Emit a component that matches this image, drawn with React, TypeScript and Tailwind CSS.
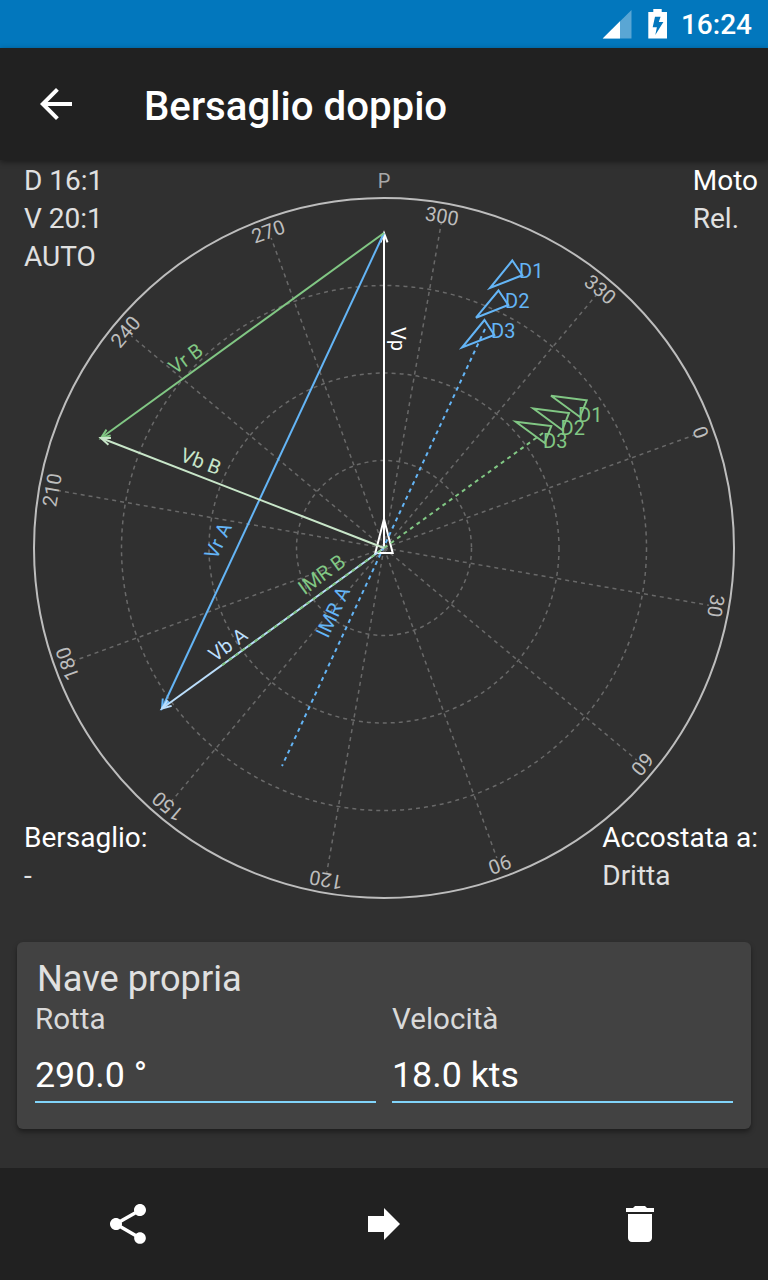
const CX = 384;
const CY = 388;
const R = 350;
const HEADING = 290;

const BEARINGS = [0, 30, 60, 90, 120, 150, 180, 210, 240, 270, 300, 330];

type Point = [number, number];

function Arrow({ from, to, color }: { from: Point; to: Point; color: string }) {
  const a = Math.atan2(to[1] - from[1], to[0] - from[0]);
  const len = 10;
  const spread = 0.36;
  const wing = (s: number) =>
    `${to[0] - len * Math.cos(a + s)},${to[1] - len * Math.sin(a + s)}`;
  return (
    <g stroke={color} fill="none" strokeWidth="2">
      <line x1={from[0]} y1={from[1]} x2={to[0]} y2={to[1]} />
      <polyline points={`${wing(spread)} ${to[0]},${to[1]} ${wing(-spread)}`} />
    </g>
  );
}

function Label({ x, y, angle = 0, color, children }: { x: number; y: number; angle?: number; color: string; children: string }) {
  return (
    <text transform={`translate(${x} ${y}) rotate(${angle})`} fill={color} fontSize="20">
      {children}
    </text>
  );
}

const BLUE = "#64b5f6";
const GREEN = "#81c784";
const PALE_BLUE = "#bbdefb";
const PALE_GREEN = "#c8e6c9";

const OWN: Point = [384, 388];
const TOP: Point = [384, 73];
const VA: Point = [162, 548.5];
const VB: Point = [101, 278];

function Plot() {
  return (
    <svg className="block h-[782px] w-full font-[Roboto,sans-serif]" viewBox="0 0 768 782">
      <g fill="none" stroke="#696969" strokeWidth="1.5" strokeDasharray="4 4">
        {[1, 2, 3].map((i) => (
          <circle key={i} cx={CX} cy={CY} r={(R * i) / 4} />
        ))}
        {BEARINGS.map((b) => {
          const a = ((b - HEADING) * Math.PI) / 180;
          return <line key={b} x1={CX} y1={CY} x2={CX + 330 * Math.sin(a)} y2={CY - 330 * Math.cos(a)} />;
        })}
      </g>
      <circle cx={CX} cy={CY} r={R} fill="none" stroke="#bdbdbd" strokeWidth="2" />
      <g fill="#bdbdbd" fontSize="20" textAnchor="middle">
        <text x={CX} y="28" fill="#a8a8a8">P</text>
        {BEARINGS.map((b) => (
          <text key={b} transform={`rotate(${b - HEADING} ${CX} ${CY})`} x={CX - 0.5} y="58">
            {b}
          </text>
        ))}
      </g>

      <Arrow from={OWN} to={TOP} color="#ffffff" />
      <polygon points="384,359 375.3,393 392.7,393" fill="none" stroke="#ffffff" strokeWidth="2" />
      <Label x={391} y={167} angle={90} color="#ffffff">Vp</Label>

      <Arrow from={TOP} to={VA} color={BLUE} />
      <Arrow from={OWN} to={VA} color={PALE_BLUE} />
      <line x1="485" y1="169" x2="282" y2="606" stroke={BLUE} strokeWidth="2" strokeDasharray="4 4" />
      <Arrow from={TOP} to={VB} color={GREEN} />
      <Arrow from={OWN} to={VB} color={PALE_GREEN} />
      <line x1="543" y1="273" x2="222" y2="505.2" stroke={GREEN} strokeWidth="2" strokeDasharray="4 4" />

      <Label x={216.5} y={400.5} angle={-65} color={BLUE}>Vr A</Label>
      <Label x={215} y={502.5} angle={-36} color={PALE_BLUE}>Vb A</Label>
      <Label x={328} y={479} angle={-65} color={BLUE}>IMR A</Label>
      <Label x={175} y={215} angle={-36} color={GREEN}>Vr B</Label>
      <Label x={179} y={300.5} angle={21} color={PALE_GREEN}>Vb B</Label>
      <Label x={304.5} y={435.5} angle={-36} color={GREEN}>IMR B</Label>

      <g fill="none" stroke={BLUE} strokeWidth="2">
        <polygon points="512.3,100.5 490,128 522.3,115.3" />
        <polygon points="498.5,130.5 476,157.7 508.3,145" />
        <polygon points="484.5,160 462,187.5 494.3,175" />
      </g>
      <Label x={519} y={118} color={BLUE}>D1</Label>
      <Label x={505} y={148} color={BLUE}>D2</Label>
      <Label x={491} y={178} color={BLUE}>D3</Label>
      <g fill="none" stroke={GREEN} strokeWidth="2">
        <polygon points="551,235.7 586.7,240.3 580,257" />
        <polygon points="533.3,248.5 569,253 562.3,270" />
        <polygon points="515.7,261.7 551.3,266 544.7,283" />
      </g>
      <Label x={578} y={262} color={GREEN}>D1</Label>
      <Label x={560.5} y={275} color={GREEN}>D2</Label>
      <Label x={543} y={288} color={GREEN}>D3</Label>
    </svg>
  );
}

function Field({ label, value }: { label: string; value: string }) {
  return (
    <div className="flex-1">
      <div className="pt-px text-[29.6px] leading-9 text-[#d9d9d9]">{label}</div>
      <div className="mt-2.5 flex h-14 items-center border-b-2 border-[#81d4fa] pt-1 text-[35.8px] text-white">
        {value}
      </div>
    </div>
  );
}

export default function App() {
  return (
    <div className="flex h-[1280px] w-[768px] flex-col bg-[#303030] font-[Roboto,sans-serif]">
      <header className="flex h-12 shrink-0 items-center justify-end bg-[#0277bd] pr-4 text-white">
        <svg className="mr-[11px] h-12 w-[70px]" viewBox="600 0 70 48">
          <path d="M602.7 38.6 L631.5 10 V38.6 Z" fill="#fff" fillOpacity=".35" />
          <path d="M602.7 38.6 L620 21.3 V38.6 Z" fill="#fff" />
          <path d="M653.3 9h8.4v3h5.3v26.6h-18.7V12h5z" fill="#fff" />
          <path d="M655 16.8h5.6L658.8 22h4.6L655.3 35l1.6-7.8h-4.2z" fill="#0277bd" />
        </svg>
        <span className="pt-0.5 text-[28px] font-medium">16:24</span>
      </header>

      <div className="z-10 flex h-28 shrink-0 items-center bg-[#212121] pl-8 text-white shadow-[0_2px_6px_rgba(0,0,0,0.45)]">
        <svg className="size-12" viewBox="0 0 24 24" fill="currentColor">
          <path d="M20 11H7.83l5.59-5.59L12 4l-8 8 8 8 1.41-1.41L7.83 13H20v-2z" />
        </svg>
        <h1 className="ml-16 pt-1.5 text-[40.2px] font-medium leading-none">Bersaglio doppio</h1>
      </div>

      <main className="relative h-[782px] shrink-0 text-[28px] leading-[38px] text-[#e0e0e0]">
        <Plot />
        <div className="absolute top-0.5 left-6">
          <p>D 16:1</p>
          <p>V 20:1</p>
          <p>AUTO</p>
        </div>
        <div className="absolute top-0.5 right-2.5">
          <p className="text-white">Moto</p>
          <p>Rel.</p>
        </div>
        <div className="absolute bottom-[47px] left-6">
          <p className="text-white">Bersaglio:</p>
          <p>-</p>
        </div>
        <div className="absolute right-2.5 bottom-[47px]">
          <p className="text-white">Accostata a:</p>
          <p>Dritta</p>
        </div>
      </main>

      <section className="mx-[17px] h-[187px] shrink-0 rounded-md bg-[#424242] px-[18px] pt-4 shadow-[0_3px_5px_rgba(0,0,0,0.4)]">
        <h2 className="pl-0.5 text-[36.2px] leading-[42px] text-[#e0e0e0]">Nave propria</h2>
        <div className="flex gap-4">
          <Field label="Rotta" value="290.0 °" />
          <Field label="Velocità" value="18.0 kts" />
        </div>
      </section>

      <nav className="mt-auto grid h-28 shrink-0 grid-cols-3 place-items-center bg-[#212121] text-white">
        <svg className="size-12" viewBox="0 0 24 24" fill="currentColor">
          <path d="M18 16.08c-.76 0-1.44.3-1.96.77L8.91 12.7c.05-.23.09-.46.09-.7s-.04-.47-.09-.7l7.05-4.11c.54.5 1.25.81 2.04.81 1.66 0 3-1.34 3-3s-1.34-3-3-3-3 1.34-3 3c0 .24.04.47.09.7L8.04 9.81C7.5 9.31 6.79 9 6 9c-1.66 0-3 1.34-3 3s1.34 3 3 3c.79 0 1.5-.31 2.04-.81l7.12 4.16c-.05.21-.08.43-.08.65 0 1.61 1.31 2.92 2.92 2.92 1.61 0 2.92-1.31 2.92-2.92s-1.31-2.92-2.92-2.92z" />
        </svg>
        <svg className="size-12" viewBox="0 0 24 24" fill="currentColor">
          <path d="M12 8V4l8 8-8 8v-4H4V8z" />
        </svg>
        <svg className="size-12" viewBox="0 0 24 24" fill="currentColor">
          <path d="M6 19c0 1.1.9 2 2 2h8c1.1 0 2-.9 2-2V7H6v12zM19 4h-3.5l-1-1h-5l-1 1H5v2h14V4z" />
        </svg>
      </nav>
    </div>
  );
}
